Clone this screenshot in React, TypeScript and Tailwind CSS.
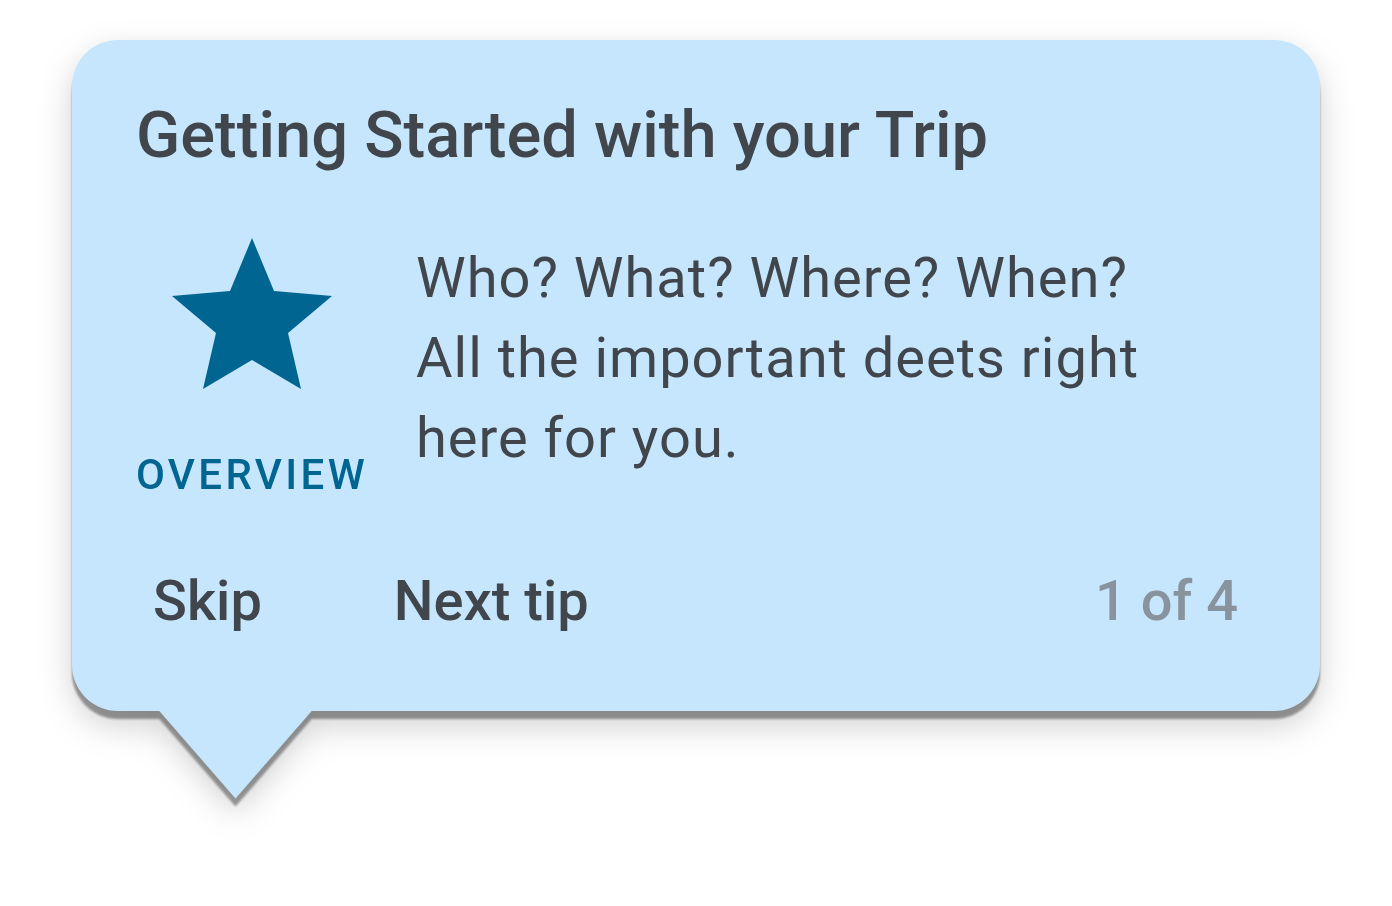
import React from "react";

function Star() {
  return (
    <svg width="160" height="152" viewBox="0 0 160 152" className="block">
      <polygon
        points="80,0 102,53 160,58 116,95 129,151 80,122 31,151 44,95 0,58 58,53"
        fill="#006591"
      />
    </svg>
  );
}

export default function App() {
  return (
    <div className="min-h-[906px] w-[1392px] bg-white pt-[40px] pl-[72px] font-['Roboto',sans-serif]">
      <div className="w-[1248px] [filter:drop-shadow(0_8px_1px_rgba(0,0,0,0.37))_drop-shadow(0_12px_16px_rgba(0,0,0,0.18))]">
        {/* Card */}
        <div className="rounded-[46px] bg-[#c5e6fd] pt-[56px] pb-[75px] pl-[66px] pr-[82px]">
          <h1 className="-ml-[2px] text-[65px] leading-[1.2] font-medium text-[#41464d]">
            Getting Started with your Trip
          </h1>

          <div className="mt-[64px] flex items-start gap-[50px]">
            <div className="flex w-[228px] flex-col items-center">
              <Star />
              <div className="mt-[60px] text-[42px] leading-[1.2] font-medium tracking-[0.08em] text-[#006591]">
                OVERVIEW
              </div>
            </div>
            <p className="w-[760px] text-[56px] leading-[80px] tracking-[1px] text-[#41464d]">
              Who? What? Where? When? All the important deets right here for you.
            </p>
          </div>

          <div className="mt-[68px] flex items-center text-[56px] leading-[1.2] font-medium">
            <button className="ml-[15px] text-[#41464d]">Skip</button>
            <button className="ml-[132px] text-[#41464d]">Next tip</button>
            <span className="ml-auto text-[#88939d]">1 of 4</span>
          </div>
        </div>
        {/* Pointer */}
        <div className="-mt-px ml-[86px] h-[89px] w-[155px] bg-[#c5e6fd] [clip-path:polygon(0_0,100%_0,50%_100%)]" />
      </div>
    </div>
  );
}
